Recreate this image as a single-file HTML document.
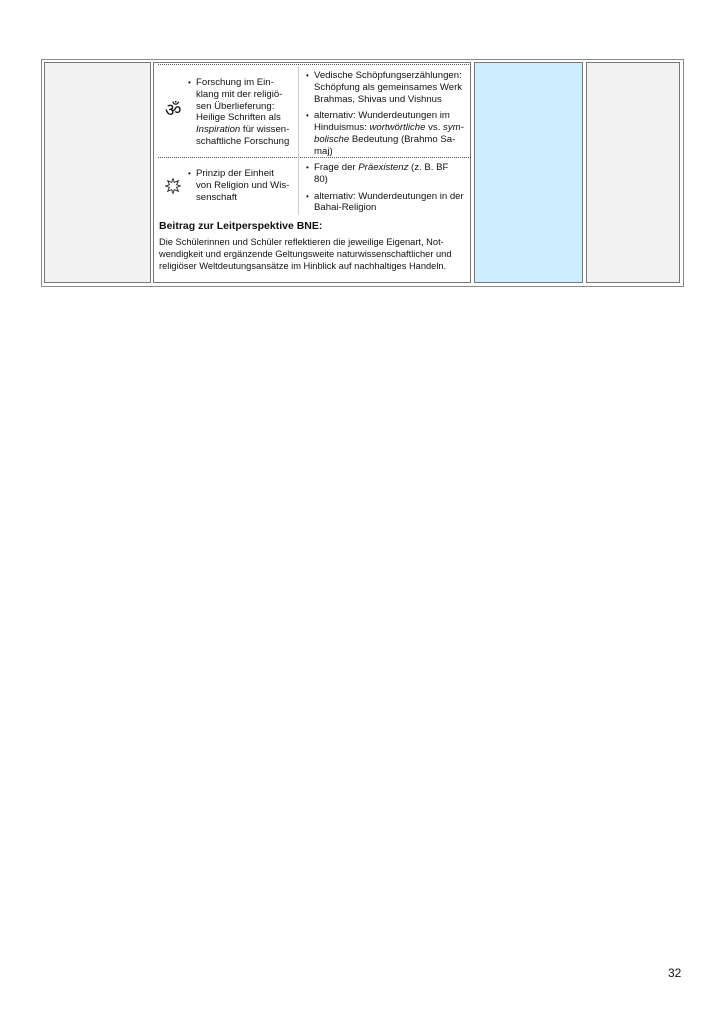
<!DOCTYPE html>
<html><head><meta charset="utf-8"><style>
body{margin:0;width:724px;height:1024px;background:#fff;position:relative;font-family:"Liberation Sans",sans-serif;color:#111;font-size:9.6px;line-height:11.8px}
.a{position:absolute}
.cell{position:absolute;border:1px solid #777;box-sizing:border-box}
.t{position:absolute;white-space:nowrap}
ul{margin:0;padding:0;list-style:none}
li{position:relative;padding-left:9px}
li:before{content:"•";position:absolute;left:1px;top:0;font-size:8px}
</style></head><body>
<div class="a" style="left:41px;top:59px;width:643px;height:228px;border:1px solid #888;box-sizing:border-box"></div>
<div class="cell" style="left:44px;top:62px;width:107px;height:221px;background:#f2f2f2"></div>
<div class="cell" style="left:153px;top:62px;width:318px;height:221px;background:#fff"></div>
<div class="cell" style="left:474px;top:62px;width:109px;height:221px;background:#cdeefe"></div>
<div class="cell" style="left:586px;top:62px;width:94px;height:221px;background:#f2f2f2"></div>
<div class="a" style="left:158px;top:64px;width:313px;border-top:1px dotted #555"></div>
<div class="a" style="left:158px;top:157px;width:313px;border-top:1px dotted #555"></div>
<div class="a" style="left:298px;top:66px;height:149px;border-left:1px solid #ccc"></div>
<div class="t" style="left:165px;top:101px;font-size:18px;line-height:20px;font-family:'DejaVu Sans',sans-serif">ॐ</div>
<svg class="a" style="left:165px;top:178px" width="16" height="16" viewBox="0 0 16 16"><polygon points="8,0.5 9.3,4.4 13.3,2.7 11.6,6.7 15.5,8 11.6,9.3 13.3,13.3 9.3,11.6 8,15.5 6.7,11.6 2.7,13.3 4.4,9.3 0.5,8 4.4,6.7 2.7,2.7 6.7,4.4" fill="none" stroke="#222" stroke-width="0.9"/></svg>
<ul class="t" style="left:187px;top:77px"><li>Forschung im Ein-<br>klang mit der religiö-<br>sen Überlieferung:<br>Heilige Schriften als<br><i>Inspiration</i> für wissen-<br>schaftliche Forschung</li></ul>
<ul class="t" style="left:305px;top:70px"><li>Vedische Schöpfungserzählungen:<br>Schöpfung als gemeinsames Werk<br>Brahmas, Shivas und Vishnus</li><li style="margin-top:5px">alternativ: Wunderdeutungen im<br>Hinduismus: <i>wortwörtliche</i> vs. <i>sym-</i><br><i>bolische</i> Bedeutung (Brahmo Sa-<br>maj)</li></ul>
<ul class="t" style="left:187px;top:168px"><li>Prinzip der Einheit<br>von Religion und Wis-<br>senschaft</li></ul>
<ul class="t" style="left:305px;top:162px"><li>Frage der <i>Präexistenz</i> (z. B. BF<br>80)</li><li style="margin-top:5px">alternativ: Wunderdeutungen in der<br>Bahai-Religion</li></ul>
<div class="t" style="left:159px;top:221px;font-weight:bold;font-size:10.5px">Beitrag zur Leitperspektive BNE:</div>
<div class="t" style="left:159px;top:237px;font-size:9.3px">Die Schülerinnen und Schüler reflektieren die jeweilige Eigenart, Not-<br>wendigkeit und ergänzende Geltungsweite naturwissenschaftlicher und<br>religiöser Weltdeutungsansätze im Hinblick auf nachhaltiges Handeln.</div>
<div class="t" style="left:668px;top:968px;font-size:12px">32</div>
</body></html>
